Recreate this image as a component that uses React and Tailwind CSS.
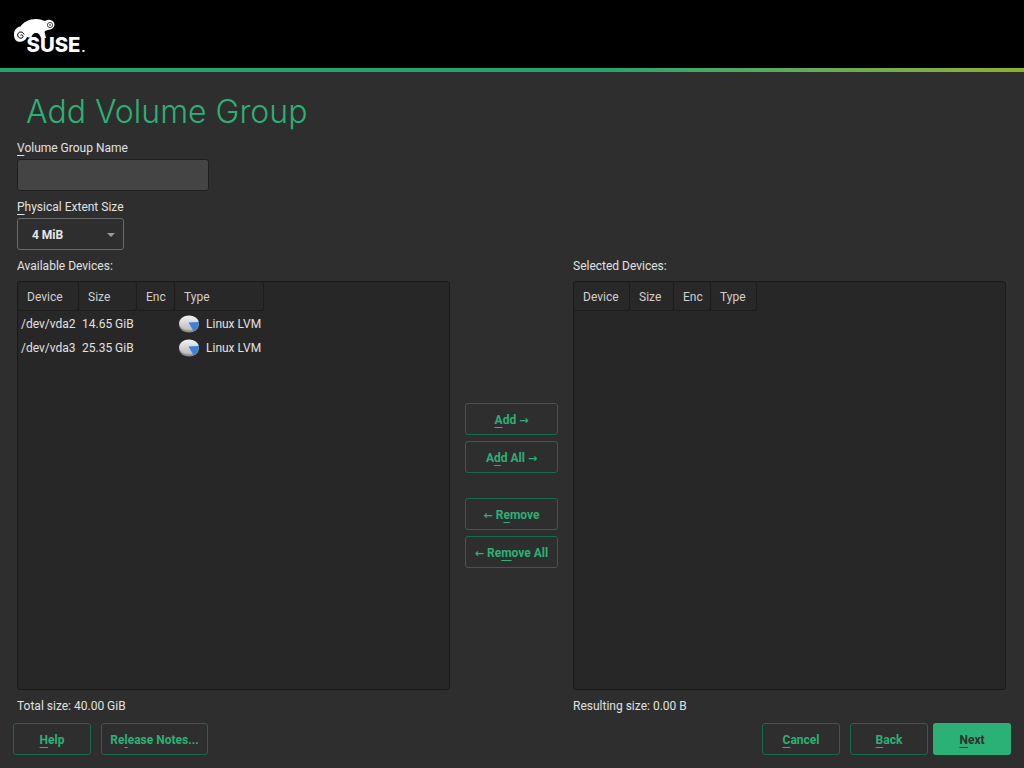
import React from 'react';

const font = { roboto: 'font-["Roboto",sans-serif]' };

const Mn = ({ children }) => <u className="underline underline-offset-[3px] decoration-1">{children}</u>;

const Arrow = ({ children }) => <span className='font-["DejaVu_Sans",sans-serif] text-[11px] leading-none font-bold'>{children}</span>;

const Logo = () => (
  <svg width="74" height="40" viewBox="0 0 74 40" className="block">
    {/* chameleon body */}
    <path
      d="M0 15C0 11 3 8 6.5 7.5C9 3.5 15 0 22 0C26 0 29 1.5 31 2C34 0 38 0.5 40 3.5C41.5 7 39 10 36 10.5C33 11 31 11.5 30.5 13L32 19L27 19C26 16 25 14 22 14C19 14 18 16 17 19L13 18C12 22 5 24.5 2 21.5C0 19.5 0 17 0 15Z"
      fill="#fff"
    />
    <path d="M10 15.5C9 12.5 5 12 3.8 15C3 18 6.5 20.5 8.7 18.5C9.8 17 8 15.2 6.6 16.2" fill="none" stroke="#000" strokeWidth="1" />
    <circle cx="36" cy="6" r="2.6" fill="none" stroke="#000" strokeWidth="0.7" />
    <circle cx="36" cy="6" r="0.8" fill="#000" />
    <text x="12.5" y="33" fill="#fff" fontFamily="Inter, sans-serif" fontWeight="800" fontSize="20" textLength="54" lengthAdjust="spacingAndGlyphs">SUSE</text>
    <rect x="68.5" y="31" width="2" height="2" fill="#fff" />
  </svg>
);

const DiskIcon = () => (
  <svg width="22" height="18" viewBox="0 0 22 18" className="shrink-0">
    <defs>
      <linearGradient id="disk" x1="0" y1="0" x2="0" y2="1">
        <stop offset="0" stopColor="#f4f4f4" />
        <stop offset="1" stopColor="#b9b9b9" />
      </linearGradient>
    </defs>
    <ellipse cx="10" cy="9.5" rx="10" ry="8" fill="#8d8d8d" />
    <ellipse cx="10" cy="8" rx="10" ry="7.5" fill="url(#disk)" />
    <path d="M9.5 7.5L20 7C20 11 18 14.5 14.5 16Z" fill="#3f7fd6" />
  </svg>
);

const Btn = ({ children, className = '' }) => (
  <button
    type="button"
    className={`h-8 pt-[1px] rounded-[3px] border border-[#1a6b4d] text-[#2bb176] text-xs font-bold flex items-center justify-center whitespace-pre ${className}`}
  >
    <span>{children}</span>
  </button>
);

const HeadCell = ({ w, children }) => (
  <div className={`${w} h-[29px] shrink-0 flex items-center pl-[9px] pt-[1px] rounded-[3px] bg-[#282828] border-r border-b border-[#1c1c1c] text-xs text-[#d0d0d0]`}>
    {children}
  </div>
);

const DeviceTable = ({ cols, rows }) => (
  <div className="h-[409px] rounded-[3px] border border-[#1a1a1a] bg-[#272727] overflow-hidden">
    <div className="flex">
      {cols.map((c) => (
        <HeadCell key={c.name} w={c.w}>{c.name}</HeadCell>
      ))}
    </div>
    <div className="pt-[1px]">
      {rows.map((r) => (
        <div key={r.dev} className="h-[24px] flex items-center text-xs text-[#e2e2e2]">
          <span className="w-[64px] pl-[3px] shrink-0">{r.dev}</span>
          <span className="w-[97px] shrink-0">{r.size}</span>
          <DiskIcon />
          <span className="ml-[5px]">Linux LVM</span>
        </div>
      ))}
    </div>
  </div>
);

const App = () => {
  return (
    <div className={`w-[1024px] h-[768px] overflow-hidden bg-[#2e2e2e] flex flex-col ${font.roboto}`}>
      <header className="h-[68px] shrink-0 bg-black pl-[14px] pt-[19px]">
        <Logo />
      </header>
      <div className="h-[4px] shrink-0 bg-gradient-to-r from-[#23a56f] from-60% to-[#8fb02e]"></div>

      <main className="flex-1 flex flex-col px-[17px]">
        <h1 className='mt-[21px] ml-[9px] h-[38px] leading-[38px] text-[32px] font-light text-[#2bb176] font-["Inter",sans-serif]'>
          Add Volume Group
        </h1>

        <label className="mt-[10px] h-[15px] leading-[15px] text-xs text-[#e2e2e2]"><Mn>V</Mn>olume Group Name</label>
        <div className="mt-[3px] w-[192px] h-8 rounded-[3px] border border-[#1f1f1f] bg-[#444444]"></div>

        <label className="mt-[9px] h-[15px] leading-[15px] text-xs text-[#e2e2e2]"><Mn>P</Mn>hysical Extent Size</label>
        <div className="mt-[3px] w-[107px] h-8 rounded-[3px] border border-[#6a6a6a] flex items-center justify-between pl-[14px] pr-[8px] pt-[1px] text-xs font-bold text-[#e8e8e8]">
          <span>4 MiB</span>
          <span className="w-0 h-0 border-x-[4px] border-x-transparent border-t-[4px] border-t-[#9a9a9a]"></span>
        </div>

        <div className="mt-[9px] flex">
          <div className="w-[433px]">
            <div className="h-[15px] leading-[15px] text-xs text-[#e2e2e2] mb-[7px]">Available Devices:</div>
            <DeviceTable
              cols={[
                { name: 'Device', w: 'w-[61px]' },
                { name: 'Size', w: 'w-[58px]' },
                { name: 'Enc', w: 'w-[38px]' },
                { name: 'Type', w: 'w-[89px]' },
              ]}
              rows={[
                { dev: '/dev/vda2', size: '14.65 GiB' },
                { dev: '/dev/vda3', size: '25.35 GiB' },
              ]}
            />
            <div className="mt-[9px] h-[15px] leading-[15px] text-xs text-[#e2e2e2]">Total size: 40.00 GiB</div>
          </div>

          <div className="w-[93px] mx-[15px] pt-[144px] flex flex-col">
            <Btn className="w-full"><Mn>A</Mn>dd <Arrow>→</Arrow></Btn>
            <Btn className="w-full mt-[6px]">A<Mn>d</Mn>d All <Arrow>→</Arrow></Btn>
            <Btn className="w-full mt-[25px]"><Arrow>←</Arrow> R<Mn>e</Mn>move</Btn>
            <Btn className="w-full mt-[6px]"><Arrow>←</Arrow> Re<Mn>m</Mn>ove All</Btn>
          </div>

          <div className="w-[433px]">
            <div className="h-[15px] leading-[15px] text-xs text-[#e2e2e2] mb-[7px]">Selected Devices:</div>
            <DeviceTable
              cols={[
                { name: 'Device', w: 'w-[56px]' },
                { name: 'Size', w: 'w-[44px]' },
                { name: 'Enc', w: 'w-[37px]' },
                { name: 'Type', w: 'w-[46px]' },
              ]}
              rows={[]}
            />
            <div className="mt-[9px] h-[15px] leading-[15px] text-xs text-[#e2e2e2]">Resulting size: 0.00 B</div>
          </div>
        </div>

        <div className="mt-[9px] -mx-[4px] flex">
          <Btn className="w-[78px]"><Mn>H</Mn>elp</Btn>
          <Btn className="w-[107px] ml-[10px]">Re<Mn>l</Mn>ease Notes...</Btn>
          <Btn className="w-[78px] ml-auto"><Mn>C</Mn>ancel</Btn>
          <Btn className="w-[78px] ml-[10px]"><Mn>B</Mn>ack</Btn>
          <button type="button" className="w-[78px] h-8 pt-[1px] ml-[5px] rounded-[3px] bg-[#2bb176] text-[#2e2e2e] text-xs font-bold flex items-center justify-center">
            <span><Mn>N</Mn>ext</span>
          </button>
        </div>
      </main>
    </div>
  );
};

export default App;
